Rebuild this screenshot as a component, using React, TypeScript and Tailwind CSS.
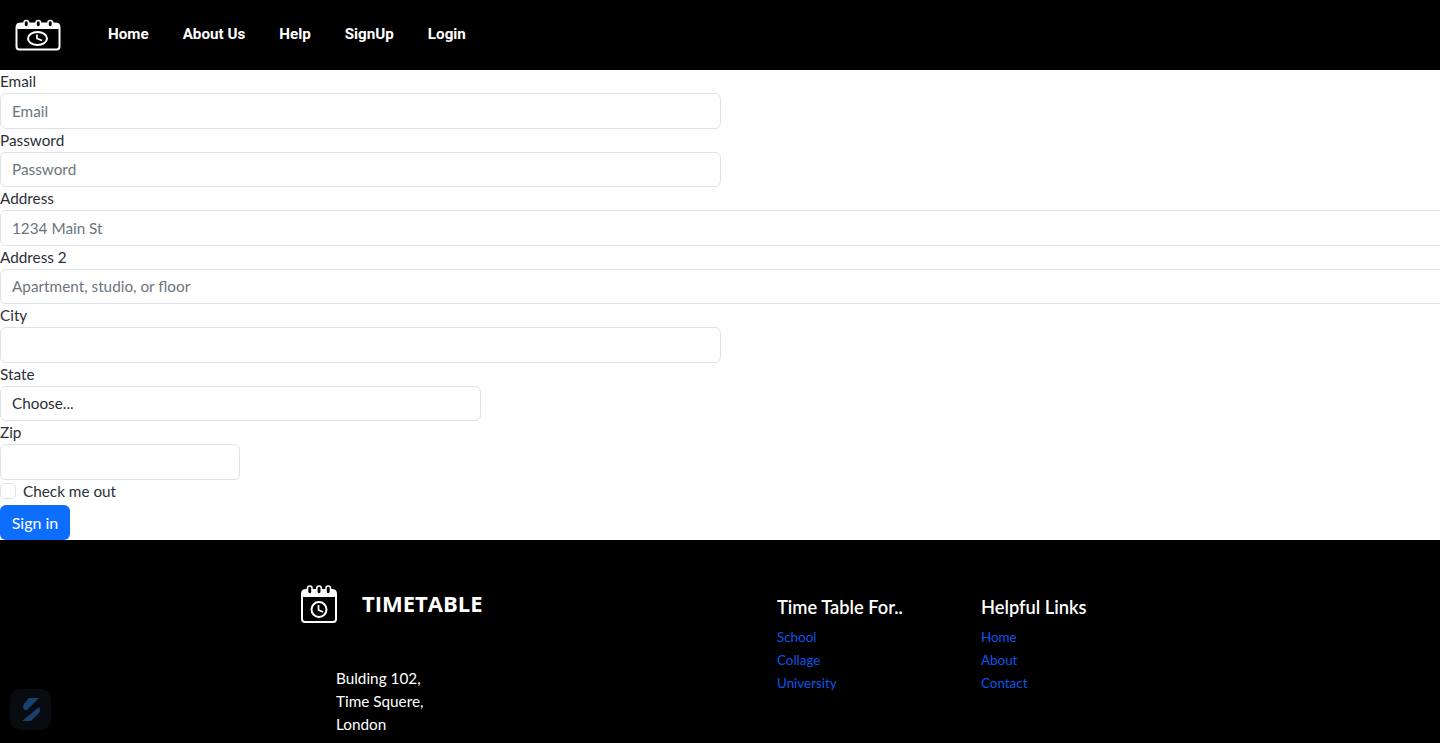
const labelClass = "block h-[23px] text-[15.3px] leading-[23px] text-[#2b3036]";
const inputClass =
  "block h-[35.5px] w-full rounded-[6px] border border-[#dee2e6] bg-white px-[11px] text-[15.3px] text-[#2b3036] placeholder:text-[#6c757d] focus:outline-none";

function Field({ label, placeholder, width }: { label: string; placeholder?: string; width: string }) {
  return (
    <div className={width}>
      <label className={labelClass}>{label}</label>
      <input type="text" placeholder={placeholder} className={inputClass} />
    </div>
  );
}

function NavLogo() {
  return (
    <svg width="46" height="32" viewBox="0 0 46 32" fill="none" className="block">
      <path
        d="M7 4.5H39.5Q44.5 4.5 44.5 8.5V27.5Q44.5 30.5 41.5 30.5H4.5Q1.5 30.5 1.5 27.5V8.5Q1.5 4.5 7 4.5Z"
        stroke="white"
        strokeWidth="2"
      />
      <rect x="1.5" y="4" width="43" height="6" rx="2" fill="white" />
      <rect x="9" y="1.5" width="4.5" height="6.5" rx="2.2" fill="black" stroke="white" strokeWidth="1.6" />
      <rect x="21" y="1.5" width="4.5" height="6.5" rx="2.2" fill="black" stroke="white" strokeWidth="1.6" />
      <rect x="33" y="1.5" width="4.5" height="6.5" rx="2.2" fill="black" stroke="white" strokeWidth="1.6" />
      <ellipse cx="22.5" cy="19.5" rx="9.5" ry="6.5" stroke="white" strokeWidth="2" />
      <path d="M22 15.5V19.5L27 21.5" stroke="white" strokeWidth="1.7" />
    </svg>
  );
}

function FooterLogo() {
  return (
    <svg width="36" height="38" viewBox="0 0 36 38" fill="none" className="block">
      <path
        d="M5 5H31Q35 5 35 9V34Q35 37 32 37H4Q1 37 1 34V9Q1 5 5 5Z"
        stroke="white"
        strokeWidth="2"
      />
      <rect x="1" y="5" width="34" height="7" rx="2" fill="white" />
      <rect x="6.5" y="1" width="4.5" height="8" rx="2.2" fill="black" stroke="white" strokeWidth="1.6" />
      <rect x="15.8" y="1" width="4.5" height="8" rx="2.2" fill="black" stroke="white" strokeWidth="1.6" />
      <rect x="25" y="1" width="4.5" height="8" rx="2.2" fill="black" stroke="white" strokeWidth="1.6" />
      <circle cx="18" cy="24.5" r="7.5" stroke="white" strokeWidth="2" />
      <path d="M17.5 20V25L22 27" stroke="white" strokeWidth="1.7" />
    </svg>
  );
}

export default function App() {
  return (
    <div className="relative h-[743px] overflow-hidden bg-white font-['Lato','Open_Sans',sans-serif] text-[15.3px]">
      {/* Navbar */}
      <nav className="flex h-[70px] items-center bg-black pl-[15px]">
        <NavLogo />
        <ul className="mb-[2px] ml-[47px] flex gap-[34px] font-['Roboto',sans-serif] text-[15.2px] font-bold text-white">
          <li>Home</li>
          <li>About Us</li>
          <li>Help</li>
          <li>SignUp</li>
          <li>Login</li>
        </ul>
      </nav>

      {/* Form */}
      <form className="h-[470px]">
        <Field label="Email" placeholder="Email" width="w-[721px]" />
        <Field label="Password" placeholder="Password" width="w-[721px]" />
        <Field label="Address" placeholder="1234 Main St" width="w-[calc(100%+12px)]" />
        <Field label="Address 2" placeholder="Apartment, studio, or floor" width="w-[calc(100%+12px)]" />
        <Field label="City" width="w-[721px]" />
        <div className="w-[481px]">
          <label className={labelClass}>State</label>
          <div className={`${inputClass} flex items-center`}>Choose...</div>
        </div>
        <Field label="Zip" width="w-[240px]" />
        <div className="flex h-[25.5px] items-center pb-[2px] text-[#2b3036]">
          <span className="h-[16px] w-[16px] rounded-[4px] border border-[#dee2e6] bg-white" />
          <span className="ml-[7px]">Check me out</span>
        </div>
        <button
          type="button"
          className="block h-[35px] w-[70px] rounded-[6px] bg-[#0d6efd] text-[16px] text-white"
        >
          Sign in
        </button>
      </form>

      {/* Footer */}
      <footer className="flex h-[203px] bg-black pl-[301px] text-white">
        <div className="w-[476px] pt-[45px]">
          <div className="flex">
            <FooterLogo />
            <span className="ml-[25px] mt-[3px] font-['Open_Sans',sans-serif] text-[22px] font-bold leading-[30px]">
              TIMETABLE
            </span>
          </div>
          <div className="ml-[35px] mt-[44px] text-[15.3px] leading-[23px]">
            <p>Bulding 102,</p>
            <p>Time Squere,</p>
            <p>London</p>
          </div>
        </div>
        <div className="w-[204px] pt-[55px]">
          <h5 className="text-[18.3px] font-semibold leading-[24px]">Time Table For..</h5>
          <ul className="mt-[7px] text-[13.4px] leading-[23px] text-[#0d55e8]">
            <li>School</li>
            <li>Collage</li>
            <li>University</li>
          </ul>
        </div>
        <div className="pt-[55px]">
          <h5 className="text-[18.3px] font-semibold leading-[24px]">Helpful Links</h5>
          <ul className="mt-[7px] text-[13.4px] leading-[23px] text-[#0d55e8]">
            <li>Home</li>
            <li>About</li>
            <li>Contact</li>
          </ul>
        </div>
      </footer>

      {/* Floating badge */}
      <div className="absolute left-[10px] top-[689px] flex h-[41px] w-[41px] items-center justify-center rounded-[10px] bg-[#080b10]">
        <svg width="20" height="26" viewBox="0 0 20 26">
          <path d="M8 1H18L6 13C3 14 1 11 3 7Z" fill="#17406e" />
          <path d="M18 10C20 13 19 15 17 17L10 24H1Z" fill="#17406e" />
        </svg>
      </div>
    </div>
  );
}
